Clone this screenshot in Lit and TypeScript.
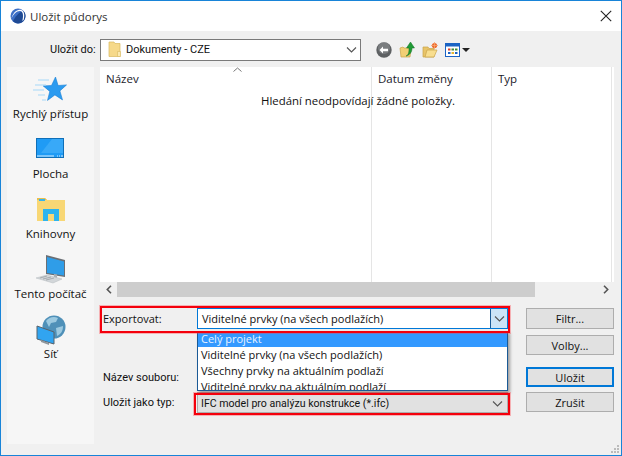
import { LitElement, html, css, svg } from "lit";
import { customElement } from "lit/decorators.js";

const chevron = html`<svg class="chev" width="11" height="6" viewBox="0 0 11 6"><path d="M1 .5l4.500 4.500L10 .5" fill="none" stroke="#555" stroke-width="1.100"/></svg>`;

const icons = {
  logo: svg`<circle cx="8" cy="8" r="7.500" fill="#3d6fc6"/><path d="M3 13C5 9 9 4 13 3c2 1 2.500 3 2.500 5 0 4-3.500 7.500-7.500 7.500-2 0-3.500-1-5-2.500z" fill="#1f4a94"/><path d="M1.500 11C3 5.500 8 2 11 3.200c2.500 1 2.400 5.800 1.300 9.800l1.400-1.200c1-4 1-8.300-2.200-9.800C7.500 .5 2.500 4.500 1.500 11z" fill="#fff"/>`,
  folder: svg`<path d="M1 1h5l1 1.500h5v13H1z" fill="#f6d98a" stroke="#d9b95f" stroke-width=".7"/><path d="M9.500 10.500h3v5h-3z" fill="#fbe9b0" stroke="#d9b95f" stroke-width=".6"/>`,
  star: svg`<path d="M23.500 1l2.600 8.500 8.400-.6-6.600 6 2.600 9-7.600-5-7.400 5.500 2.300-9-6.600-5.500 8.300-.4z" fill="#2b9bf0" stroke="#1b7fd3" stroke-width=".6"/><path d="M6 4h11M3 9h11M1 14h11M6 19h7M10 24h4" stroke="#a6d8f8" stroke-width="1.200"/>`,
  desktop: svg`<rect x=".5" y=".5" width="27" height="19" fill="#1f9bf5" stroke="#0f6fb8"/><path d="M16 1h11v14H5z" fill="#4ab3fa" opacity=".6"/><path d="M1 18h17M21 18h1M23 18h1M25 18h2" stroke="#d8efff"/>`,
  library: svg`<path d="M0 2h8l2 2h18v21H0z" fill="#f8d775"/><path d="M0 2h8l2 2H0z" fill="#e9be4d"/><rect x="2" y="3" width="6" height="2" fill="#35b5ee"/><path d="M6 25V13h16v12h-5v-7h-6v7z" fill="#2db4ee"/>`,
  computer: svg`<path d="M11 1l19 5v17l-19-3z" fill="#6a6f75"/><path d="M12 3l17 4.500v14L12 19z" fill="#2f9de8"/><path d="M19 20l3 .6v4l-3-1z" fill="#aab0b5"/><path d="M1 24l11-3 15 4-9 4z" fill="#d2d6d9" stroke="#b5babe" stroke-width=".5"/><path d="M5 24l7-2M8 25l8-2M11 26l8-2" stroke="#9aa0a5" stroke-width=".8"/>`,
  network: svg`<circle cx="18" cy="12" r="11.500" fill="#4f90b8"/><path d="M10 6c3-4 8-5 12-3l-2 4-5 1-2 4zM20 13l7-2c0 5-2 8-6 10z" fill="#9cc9e0"/><path d="M1 11l17 6v12L1 24z" fill="#31a4f0" stroke="#59626a"/><path d="M5 25l8 3v2l-8-3z" fill="#8f979d"/>`,
  back: svg`<circle cx="8" cy="8" r="7.700" fill="#5e6163"/><circle cx="8" cy="6" r="6" fill="#8d9092" opacity=".6"/><path d="M3.500 8l3.500-3.500v2.300h5v2.400H7v2.300z" fill="#fff"/>`,
  up: svg`<path d="M1 7l3-1 1 1h7l-1 9H2z" fill="#f1cf74" stroke="#c9a449" stroke-width=".7"/><path d="M7 15c3-1 3-5 3-8H7.500l4-6 4 6H13c0 4-2 7-6 8z" fill="#1f9a35" stroke="#127325" stroke-width=".5"/>`,
  newf: svg`<path d="M1 5h5l1 1.500h5V15H1z" fill="#e8c468" stroke="#c9a449" stroke-width=".7"/><path d="M3 15l2-7h10l-3 7z" fill="#f8de8f" stroke="#c9a449" stroke-width=".7"/><circle cx="12.500" cy="3.500" r="2.600" fill="#ef6a2c"/><path d="M12.500 0v7M9 3.500h7" stroke="#f5a46f" stroke-width=".8"/>`,
  view: svg`<rect x=".5" y="1.500" width="14" height="13" fill="#fff" stroke="#1b63c4"/><rect x="1" y="2" width="13" height="2.500" fill="#1b63c4"/><path d="M3 6.500h2.500v2H3z" fill="#d93f2a"/><path d="M6.500 6.500H9v2H6.500z" fill="#3f8a3a"/><path d="M10 6.500h2.500v2H10z" fill="#3f8a3a"/><path d="M3 10h2.500v2H3z" fill="#1b63c4"/><path d="M6.500 10H9v2H6.500z" fill="#e7b52e"/><path d="M10 10h2.500v2H10z" fill="#1b63c4"/>`,
};

@customElement("app-root")
export class AppRoot extends LitElement {
  static styles = css`
    :host {
      display: block;
      width: 622px;
      height: 456px;
      font-family: "Open Sans", "Noto Sans", sans-serif;
      font-size: 11.5px;
      color: #111;
    }
    * { box-sizing: border-box; }
    svg { display: block; flex: none; }
    .window {
      width: 622px; height: 456px;
      border: 1px solid #1884d8;
      background: #f0f0f0;
      display: flex; flex-direction: column;
      position: relative;
    }
    .title {
      height: 30px; background: #fff;
      display: flex; align-items: center;
      padding: 0 9px 0 9px; gap: 4px;
      color: #333;
    }
    .title .grow { flex: 1; }
    .toolbar {
      height: 36px;
      display: flex; align-items: center;
      padding: 1px 0 0 49px;
    }
    .narrow { font-family: Roboto, sans-serif; font-size: 11px; }
    .lbl-save { width: 50px; white-space: nowrap; }
    .path {
      width: 261px; height: 22px;
      background: #fff; border: 1px solid #7a7a7a;
      display: flex; align-items: center;
      padding: 0 3px 0 7px; gap: 4px;
      margin-right: 15px;
    }
    .path span { flex: 1; }
    .tools { display: flex; align-items: center; }
    .tools svg { margin-right: 7px; }
    .tools .v { margin-right: 2px; }
    .tri { width: 0; height: 0; border: 4px solid transparent; border-top: 4px solid #222; border-bottom: 0; }
    .main {
      flex: 1; display: flex;
      padding: 0 7px 11px 6px;
      gap: 6px;
    }
    .side {
      width: 87px; background: #f6f6f6;
      display: flex; flex-direction: column; align-items: center;
      padding-top: 3px;
    }
    .place {
      height: 60px; display: flex; flex-direction: column;
      align-items: center; justify-content: flex-end;
      white-space: nowrap;
      padding-bottom: 9px;
    }
    .content { flex: 1; display: flex; flex-direction: column; min-width: 0; }
    .list {
      height: 215px; background: #fff;
      display: grid; grid-template-columns: 272px 120px 120px 1fr;
      position: relative;
    }
    .col { border-right: 1px solid #e5e5e5; padding: 4px 0 0 6px; white-space: nowrap; color: #1a1a2a; }
    .col.last { border: 0; }
    .caret { position: absolute; left: 133px; top: 0; }
    .empty { position: absolute; left: 161px; top: 26px; white-space: nowrap; color: #111; font-size: 11.4px; }
    .hbar {
      height: 15px; background: #f0f0f0;
      display: flex; align-items: center; justify-content: space-between;
    }
    .track { flex: 1; height: 15px; display: flex; }
    .grip { width: 418px; background: #cdcdcd; }
    .ar { width: 17px; display: flex; align-items: center; justify-content: center; }
    .form {
      flex: 1;
      display: grid;
      grid-template-columns: 94px 311px 18px 88px;
      grid-template-rows: 21px 6px 20px 12px 20px 5px 21px;
      padding: 11px 0 0 3px;
      position: relative;
      font-size: 11px;
    }
    .label { display: flex; align-items: center; white-space: nowrap; }
    .combo {
      display: flex; align-items: center; position: relative;
      white-space: nowrap;
    }
    .combo.open { background: #fff; border: 1px solid #0078d7; padding-left: 4px; }
    .combo.open span { flex: 1; }
    .arrow {
      position: absolute; right: 0; top: 0; bottom: 0; width: 17px;
      background: #cce4f7; border-left: 1px solid #1a5a96;
      display: flex; align-items: center; justify-content: center;
    }
    .combo.type {
      background: #e1e1e1; border: 1px solid #adadad; padding: 2px 4px 0 3px;
      justify-content: space-between;
      font-size: 10.6px;
    }
    .btn {
      background: #e1e1e1; border: 1px solid #adadad;
      display: flex; align-items: center; justify-content: center;
    }
    .btn.short { height: 20px; }
    .btn.def { border: 2px solid #0078d7; }
    .r1 { grid-row: 1; } .r3 { grid-row: 3; } .r5 { grid-row: 5; } .r7 { grid-row: 7; }
    .c1 { grid-column: 1; } .c2 { grid-column: 2; } .c4 { grid-column: 4; }
    .rfield { background: #fff; border: 1px solid #7a7a7a; }
    .drop {
      position: absolute; left: 97px; top: 34px; width: 311px; height: 60px;
      background: #fff;
      border: 1px solid #1a5a96; border-top: 0;
      box-shadow: 2px 2px 3px rgba(0,0,0,.35);
      overflow: hidden; z-index: 2;
    }
    .drop div { height: 16px; padding: 0 0 2px 3px; display: flex; align-items: center; white-space: nowrap; }
    .drop .sel { background: #3399ff; color: #e8f3ff; }
    .red {
      position: absolute; border: 2px solid #f4000c; z-index: 3; pointer-events: none;
      box-shadow: 0 0 0 1px rgba(255,60,70,.35);
    }
    .red.a { left: 0; top: 9px; width: 410px; height: 27px; }
    .red.b { left: 94px; top: 96px; width: 316px; height: 22px; }
    .grip-bar { position: absolute; right: 1px; bottom: 1px; }
  `;

  render() {
    const places: [string, string, number, number, number][] = [
      ["Rychlý přístup", "star", 36, 26, 4],
      ["Plocha", "desktop", 28, 20, 8],
      ["Knihovny", "library", 28, 25, 5],
      ["Tento počítač", "computer", 32, 30, 2],
      ["Síť", "network", 30, 31, 0],
    ];
    return html`
      <div class="window">
        <div class="title">
          <svg width="16" height="16" viewBox="0 0 16 16">${icons.logo}</svg>
          <span>Uložit půdorys</span>
          <span class="grow"></span>
          <svg width="12" height="12" viewBox="0 0 12 12"><path d="M.8.8l10.400 10.400M11.200.8L.8 11.200" stroke="#222" stroke-width="1.100"/></svg>
        </div>
        <div class="toolbar">
          <span class="lbl-save narrow">Uložit do:</span>
          <div class="path">
            <svg width="14" height="17" viewBox="0 0 14 17">${icons.folder}</svg>
            <span class="narrow">Dokumenty - CZE</span>
            ${chevron}
          </div>
          <div class="tools">
            <svg width="16" height="16" viewBox="0 0 16 16">${icons.back}</svg>
            <svg width="16" height="17" viewBox="0 0 16 17">${icons.up}</svg>
            <svg width="16" height="16" viewBox="0 0 16 16">${icons.newf}</svg>
            <svg class="v" width="15" height="16" viewBox="0 0 15 16">${icons.view}</svg>
            <span class="tri"></span>
          </div>
        </div>
        <div class="main">
          <div class="side">
            ${places.map(([n, k, w, h, g]) => html`
              <div class="place">
                <svg width=${w} height=${h} viewBox="0 0 ${w} ${h}" style="margin-bottom:${g}px">${(icons as any)[k]}</svg>
                <span>${n}</span>
              </div>`)}
          </div>
          <div class="content">
            <div class="list">
              <div class="col">Název</div>
              <div class="col">Datum změny</div>
              <div class="col">Typ</div>
              <div class="col last"></div>
              <svg class="caret" width="9" height="5" viewBox="0 0 9 5"><path d="M.5 4.500l4-3.500 4 3.500" fill="none" stroke="#777"/></svg>
              <div class="empty">Hledání neodpovídají žádné položky.</div>
            </div>
            <div class="hbar">
              <div class="ar"><svg width="6" height="9" viewBox="0 0 6 9"><path d="M5 .8L1.300 4.500 5 8.200" fill="none" stroke="#555" stroke-width="1.600"/></svg></div>
              <div class="track"><div class="grip"></div></div>
              <div class="ar"><svg width="6" height="9" viewBox="0 0 6 9"><path d="M1 .8l3.700 3.700L1 8.200" fill="none" stroke="#555" stroke-width="1.600"/></svg></div>
            </div>
            <div class="form">
              <div class="label r1 c1">Exportovat:</div>
              <div class="combo open r1 c2"><span>Viditelné prvky (na všech podlažích)</span>
                <div class="arrow">${chevron}</div></div>
              <div class="btn r1 c4">Filtr...</div>
              <div class="btn r3 c4">Volby...</div>
              <div class="label r5 c1 narrow">Název souboru:</div>
              <div class="rfield r5 c2"></div>
              <div class="btn def r5 c4">Uložit</div>
              <div class="label r7 c1 narrow">Uložit jako typ:</div>
              <div class="combo type r7 c2 narrow"><span>IFC model pro analýzu konstrukce (*.ifc)</span>${chevron}</div>
              <div class="btn short r7 c4">Zrušit</div>
              <div class="drop">
                <div class="sel">Celý projekt</div>
                <div>Viditelné prvky (na všech podlažích)</div>
                <div>Všechny prvky na aktuálním podlaží</div>
                <div>Viditelné prvky na aktuálním podlaží</div>
              </div>
              <div class="red a"></div>
              <div class="red b"></div>
            </div>
          </div>
        </div>
        <svg class="grip-bar" width="10" height="10" viewBox="0 0 10 10"><path d="M7 1h2v2H7zM4 4h2v2H4zM7 4h2v2H7zM1 7h2v2H1zM4 7h2v2H4zM7 7h2v2H7z" fill="#bbb"/></svg>
      </div>
    `;
  }
}
